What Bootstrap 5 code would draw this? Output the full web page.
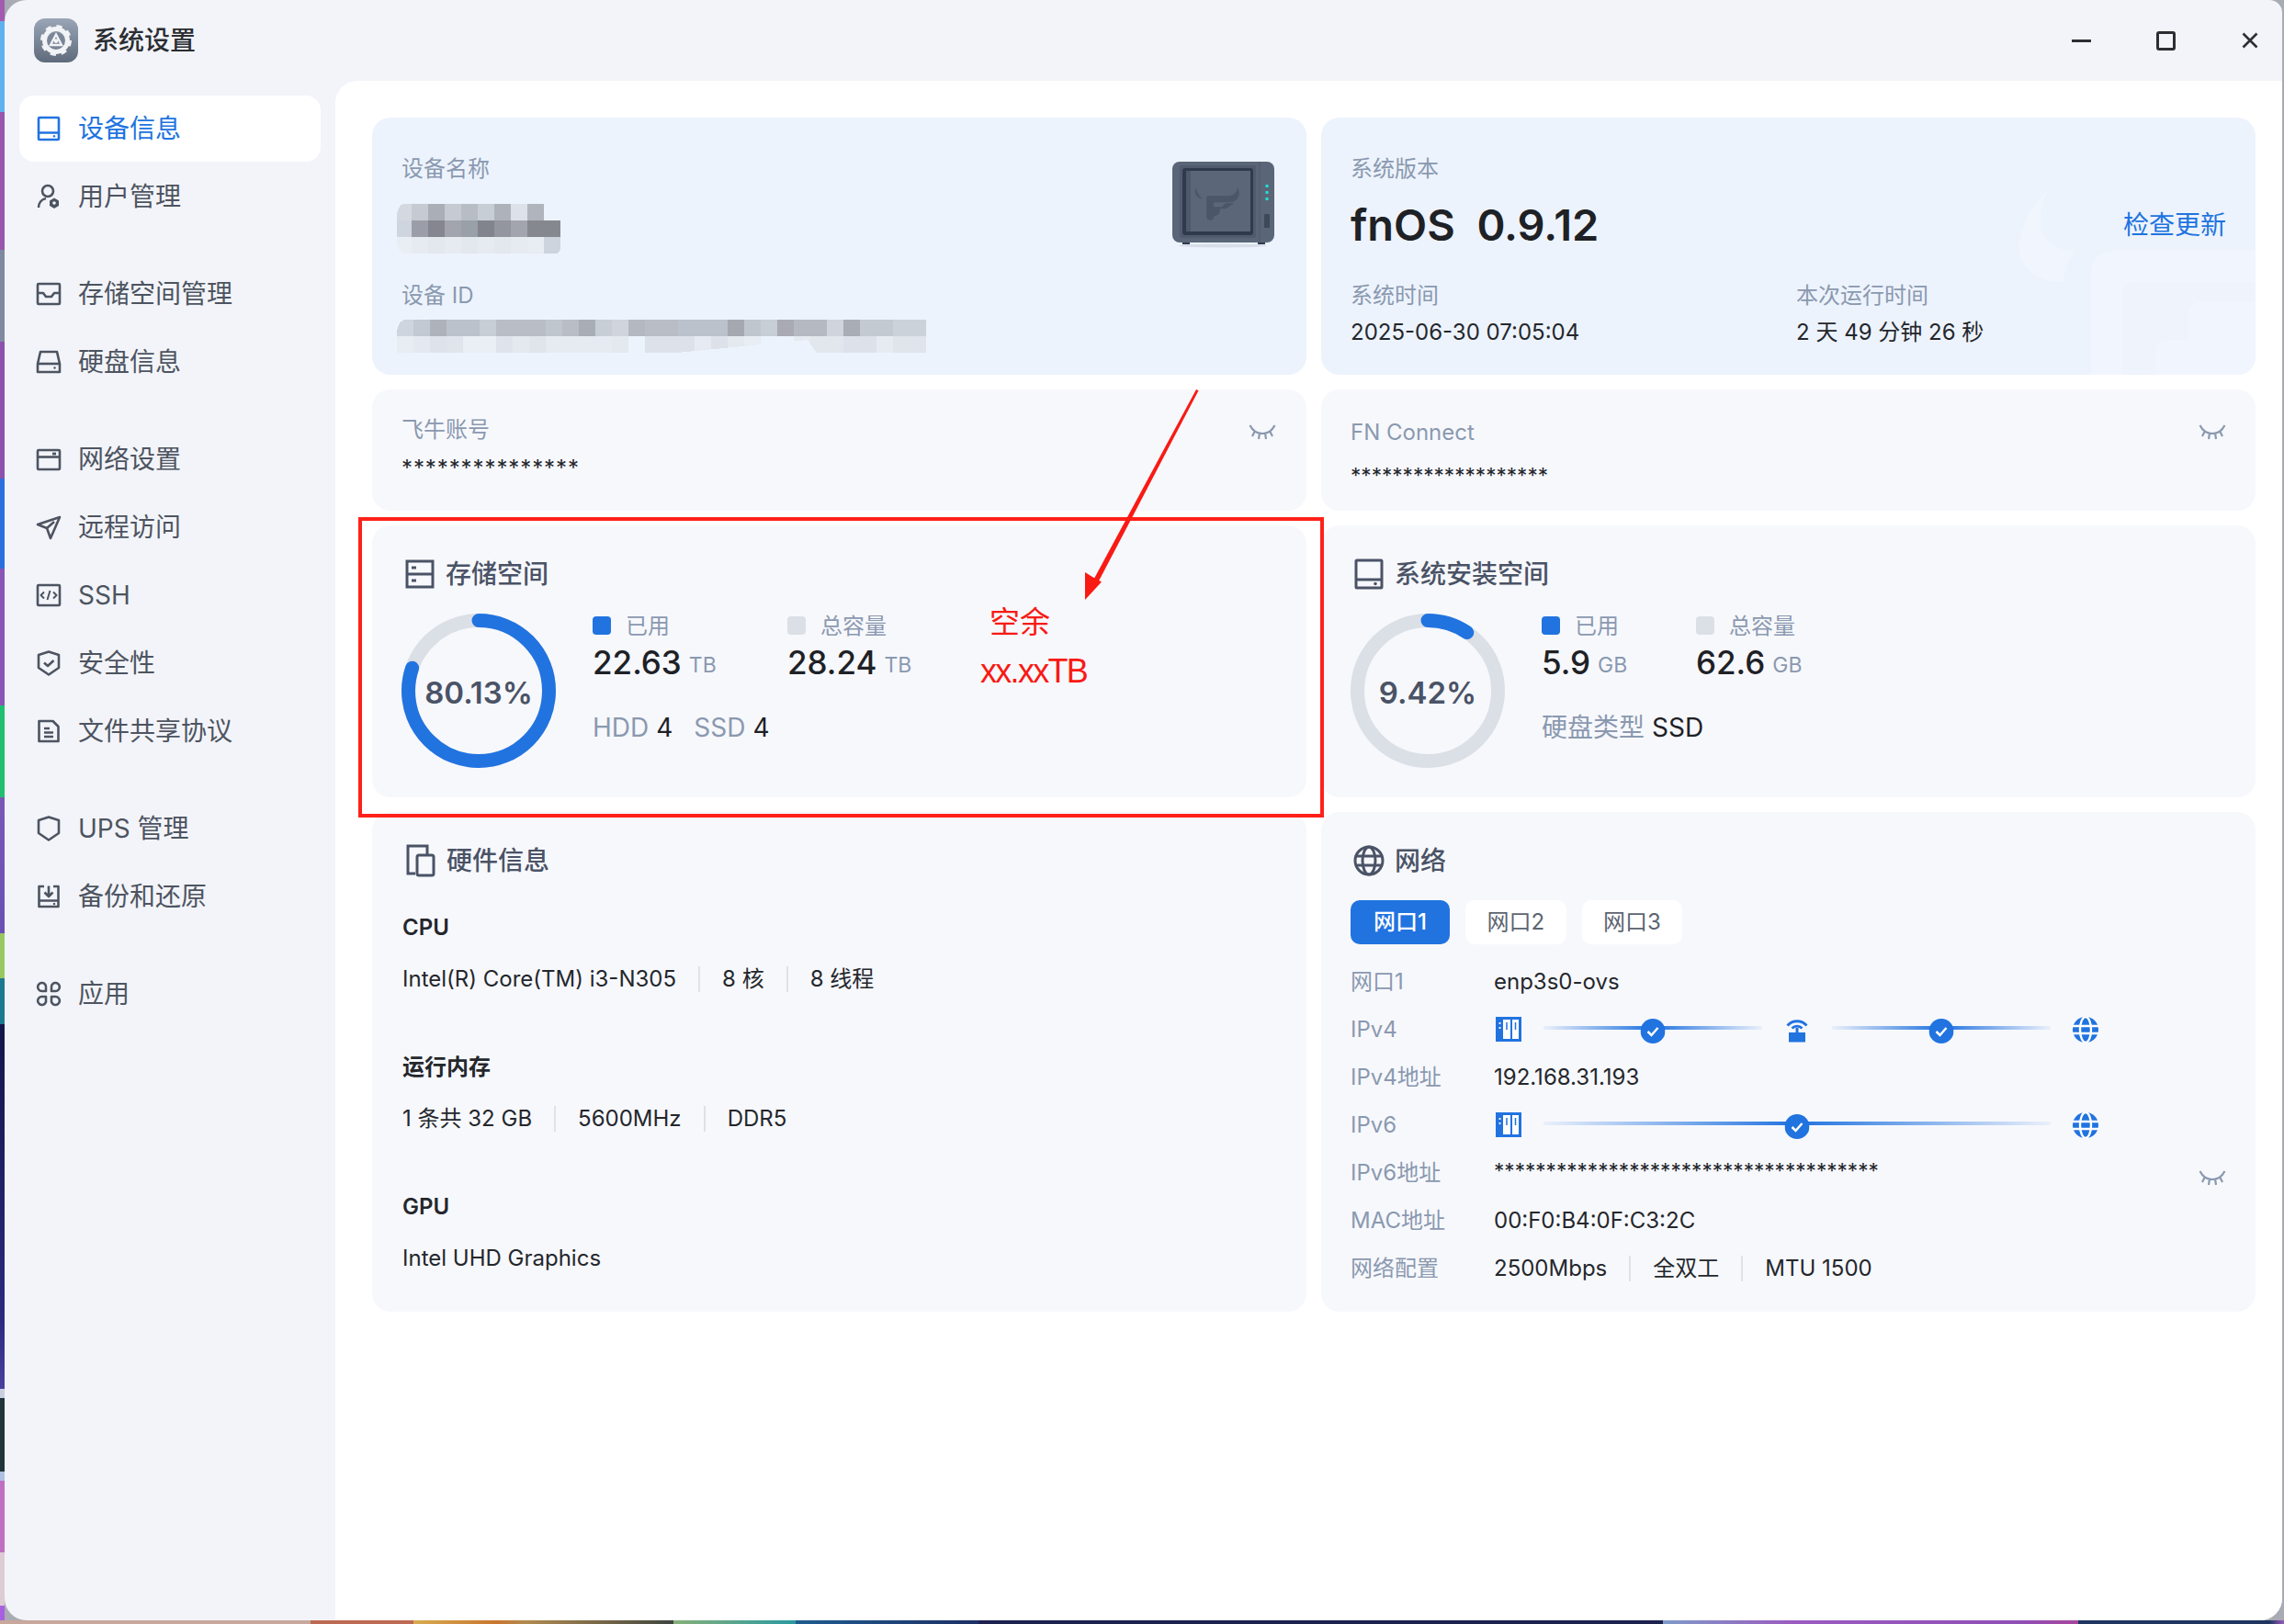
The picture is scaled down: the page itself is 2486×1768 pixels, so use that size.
<!doctype html>
<html lang="zh-CN">
<head>
<meta charset="utf-8">
<title>系统设置</title>
<link href="https://cdn.jsdelivr.net/npm/bootstrap@5.3.0/dist/css/bootstrap.min.css" rel="stylesheet">
<style>
html,body{width:2486px;height:1768px;margin:0;overflow:hidden}
body{font-family:Inter,"Noto Sans CJK SC",sans-serif;font-size:24px;line-height:36px;color:#24272c;
 background-color:#a9abb4;
 background-image:
  linear-gradient(to right,#c9a79c 0,#c9a79c 338px,#bd6a55 338px,#bd6a55 450px,#d9ab50 450px,#c9762f 540px,#b08a50 573px,#3f4540 733px,#86b07a 733px,#2a9aa0 866px,#1f5c90 866px,#1c2f66 1065px,#1d2150 1065px,#1d2150 1810px,#7f9ac8 1810px,#9a5cc0 1950px,#8f4fb5 2200px,#a8469e 2262px,#1f3560 2262px,#1f3560 2470px,#9a5cc0 2486px),
  linear-gradient(to bottom,#a35bb0 0,#a35bb0 23px,#5fb0ee 23px,#5fb0ee 122px,#9a55ae 122px,#9a55ae 272px,#7f8aa0 272px,#7f8aa0 372px,#8d50ad 372px,#8d50ad 521px,#2a6fdf 521px,#2a6fdf 619px,#8a55b5 619px,#8a55b5 768px,#20c070 768px,#20c070 868px,#7a58b8 868px,#6a50b5 1016px,#9ac860 1016px,#9ac860 1065px,#1a7a90 1065px,#1a7a90 1115px,#12164a 1115px,#2b2a80 1437px,#4a3fa0 1512px,#c8d0e0 1512px,#c8d0e0 1522px,#20343a 1522px,#20343a 1602px,#b0c0e0 1602px,#b0c0e0 1612px,#c070c0 1612px,#c070c0 1690px,#ddccd4 1690px,#ddccd4 1748px,#a860e0 1748px,#a860e0 1768px);
 background-repeat:no-repeat;
 background-size:100% 4px,5px 100%;
 background-position:0 1764px,0 0}
.win{margin-left:5px;width:2479px;height:1764px;border-radius:24px 14px 24px 24px;background:#f3f4f9;overflow:hidden}
.topbar{height:88px;padding-left:32px;padding-right:26px}
.appicon{width:48px;height:48px;border-radius:12px;background:linear-gradient(180deg,#9aa6b7,#5f6b7b)}
.apptitle{font-size:28px;font-weight:500;color:#2b2e33;margin-left:16px}
.ctl-gap{gap:71px}
.clz{margin-left:1.500px}
.side{width:360px;padding:16px}
.navi{height:72px;margin-bottom:2px;padding-left:18px;gap:18px;border-radius:16px;color:#4d5461;font-size:28px;text-decoration:none}
.navi svg{width:28px;height:28px;fill:none;stroke:currentColor;stroke-width:2.600;flex:none;stroke-linejoin:round}
.navi.on{background:#fff;color:#2173e0}
.navi:hover{color:#4d5461}
.navi.on:hover{color:#2173e0}
.grp{margin-bottom:34px}
.content{border-top-left-radius:24px;background:#fff;padding:40px 29px 0 40px}
.pane{border-radius:20px;background:#f7f8fc;position:relative;overflow:hidden;height:100%}
.tint{background:#edf3fc}
.rw1{height:280px}.rw2{height:132px}.rw3{height:296px}.rw4{height:544px}
.lbl{color:#8a99b0;line-height:36px}
.mosaic{display:block;margin-left:-5px}
.pad-dev{padding:38px 35px 0 32px}
.pad-sys{padding:38px 32px 0 32px}
.pad-acct{padding:26px 33px 0 32px}
.pad-conn{padding:29px 32px 0 32px}
.pad-store{padding:33px 32px 0 32px}
.pad-hw{padding:33px 32px 0 33px}
.mt-name{margin-top:20px}
.mt-id{margin-top:28px}
.mt-idv{margin-top:8px}
.nas{margin-top:9px}
.ver{font-size:47px;line-height:60px;font-weight:600;margin-top:13px;white-space:pre;color:#1e2126}
.upd{color:#2173e0;font-size:28px;text-decoration:none;margin-top:13px}
.tcol{width:485px}
.mt-t{margin-top:29px}
.mt-v{margin-top:4px}
.wm{position:absolute;right:0;bottom:0;display:block}
.over{position:relative;z-index:1}
.stars1{margin-top:6px;font-size:24px;letter-spacing:.9px}
.stars2{margin-top:11px;font-size:22.600px}
.eye{width:30px;height:20px;fill:none;stroke:#8a99b0;stroke-width:2.200;flex:none}
.eye-l{margin-top:6px}
.ttl{font-size:28px;line-height:40px;font-weight:500;color:#4a5366;gap:8px}
.ttl svg{width:40px;height:40px;fill:none;stroke:#4a5366;stroke-width:3;flex:none}
.donwrap{margin-top:23px;gap:40px}
.donut{width:168px;height:168px;position:relative;flex:none}
.donut svg{display:block;width:168px;height:168px;transform:rotate(-90deg)}
.pct{font-size:33px;line-height:40px;font-weight:600;color:#4a5366;margin-top:2px}
.stat{margin-top:-4px}
.w212{width:212px}.w168{width:168px}
.sq{width:20px;height:20px;border-radius:4px;margin-right:16px;flex:none;background:#dbdfe6;margin-top:-2px}
.sq.blue{background:#2173e0}
.big{font-size:35px;line-height:50px;font-weight:500;margin-top:-4px;color:#1e2126}
.unit{font-size:23px;color:#8a99b0;font-weight:400;margin-left:8px;vertical-align:2px}
.ln2{margin-top:25px;font-size:28px}
.ln2 b{font-weight:400;color:#1e2126;margin-left:8px}
.ln2 .lbl{color:#8a99b0}
.sp{margin-right:23px}
.hwgrp{margin-top:35px}
.hwl{font-weight:600;color:#24272c}
.hwv{margin-top:20px;margin-bottom:60px}
.hwgrp .hwv:last-child{margin-bottom:0}
.dv{width:2px;height:28px;background:#dfe2e8;margin:0 24px}
.tabs{margin-top:23px;gap:17px}
.tabbtn{height:48px;padding:0 23.500px;border-radius:10px;background:#fff;color:#5c6472;border:0;font-size:24px;line-height:48px}
.tabbtn.on{background:#2173e0;color:#fff;font-weight:500;padding:0 25px}
.tabbtn:hover{background:#fff;color:#5c6472}
.tabbtn.on:hover{background:#2173e0;color:#fff}
.netlist{margin-top:14px}
.nrow{height:52px;padding-top:2px}
.nkey{width:156px;color:#8a99b0;flex:none}
.path{width:656px;margin-left:2px}
.nic{width:28px;height:28px;flex:none;display:block}
.conn{position:relative;flex:1 1 0;height:4px;margin:-5px 24px 0;background:linear-gradient(90deg,rgba(33,115,224,.06),#2173e0 50%,rgba(33,115,224,.06))}
.chk{position:absolute;left:50%;top:-8px;transform:translateX(-50%);width:27px;height:27px;display:block}
.stars3{font-size:22.600px;margin-top:-5px}
.eye6{margin-top:11px}
.annot{position:absolute;left:0;top:0;width:100%;height:100%;pointer-events:none;z-index:5}
.redbox{position:absolute;left:25px;top:475px;width:1051px;height:327px;border:4px solid #ff2119}
.arrow{position:absolute;left:0;top:0}
.r-a{position:absolute;left:712px;top:567px;font-size:33px;line-height:44px;color:#f91a14;font-weight:400}
.r-b{position:absolute;left:702px;top:621px;font-size:36px;line-height:44px;color:#f91a14;font-family:"Liberation Sans",sans-serif;letter-spacing:-1.700px}
</style>
</head>
<body>
<div class="win d-flex flex-column">
  <header class="topbar d-flex align-items-center flex-shrink-0">
    <div class="appicon d-flex align-items-center justify-content-center">
      <svg width="34" height="34" viewBox="0 0 34 34"><circle cx="17" cy="17" r="12.500" fill="none" stroke="#f1f3f6" stroke-width="5"/><circle cx="17" cy="17" r="15" fill="none" stroke="#f1f3f6" stroke-width="4" stroke-dasharray="6 5.780"/><circle cx="17" cy="17" r="9" fill="#7b8798"/><path d="M17 10.500 23 22H11Z" fill="none" stroke="#f1f3f6" stroke-width="2.400"/><circle cx="17" cy="17.600" r="2.400" fill="#f1f3f6"/></svg>
    </div>
    <div class="apptitle">系统设置</div>
    <div class="ms-auto d-flex align-items-center ctl-gap">
      <svg width="21" height="21" viewBox="0 0 21 21"><rect y="9" width="21" height="3" fill="#2b2e33"/></svg>
      <svg width="21" height="21" viewBox="0 0 21 21"><rect x="1.500" y="1.500" width="18" height="18" rx="1.500" fill="none" stroke="#2b2e33" stroke-width="3"/></svg>
      <svg class="clz" width="18" height="18" viewBox="0 0 18 18"><path d="M1.500 1.500l15 15M16.500 1.500l-15 15" stroke="#2b2e33" stroke-width="2.600" fill="none"/></svg>
    </div>
  </header>
  <div class="d-flex flex-grow-1">
    <aside class="side flex-shrink-0">
      <nav class="d-flex flex-column">
        <a class="navi on d-flex align-items-center" href="#"><svg viewBox="0 0 28 28"><rect x="3" y="2" width="22" height="24" rx="1"/><path d="M3 18.500h22"/><circle cx="20" cy="22.300" r="1.200" fill="currentColor" stroke="none"/></svg>设备信息</a>
        <a class="navi grp d-flex align-items-center" href="#"><svg viewBox="0 0 28 28"><circle cx="13" cy="8" r="6"/><path d="M3 26c0-5 3-9 8-10"/><path d="M20 15.500l5 3v5.500l-5 3-5-3v-5.500z" fill="currentColor" stroke="none"/><circle cx="20" cy="21" r="1.800" fill="#f3f4f9" stroke="none"/></svg>用户管理</a>
        <a class="navi d-flex align-items-center" href="#"><svg viewBox="0 0 28 28"><rect x="2" y="3" width="24" height="22" rx="1"/><path d="M2 13h6l3 4h6l3-4h6"/></svg>存储空间管理</a>
        <a class="navi grp d-flex align-items-center" href="#"><svg viewBox="0 0 28 28"><path d="M2 16L5 3h18l3 13v9H2z"/><path d="M2 16h24"/><circle cx="20.500" cy="20.500" r="1.200" fill="currentColor" stroke="none"/></svg>硬盘信息</a>
        <a class="navi d-flex align-items-center" href="#"><svg viewBox="0 0 28 28"><rect x="2" y="4" width="24" height="21" rx="1"/><path d="M2 11.500h24"/><path d="M18 8h4" stroke-width="2.800"/></svg>网络设置</a>
        <a class="navi d-flex align-items-center" href="#"><svg viewBox="0 0 28 28"><path d="M26 3L2 11l10 4 4 11z"/><path d="M12 15l8-7"/></svg>远程访问</a>
        <a class="navi d-flex align-items-center" href="#"><svg viewBox="0 0 28 28"><rect x="2" y="3" width="24" height="22" rx="1"/><path d="M9 10.500l-3.500 3.500 3.500 3.500M19 10.500l3.500 3.500-3.500 3.500M15.500 9l-3 10" stroke-width="2"/></svg>SSH</a>
        <a class="navi d-flex align-items-center" href="#"><svg viewBox="0 0 28 28"><path d="M14 1.500L25 5v14l-11 7.500L3 19V5z"/><path d="M9 13.500l4 3.500 6.500-6"/></svg>安全性</a>
        <a class="navi grp d-flex align-items-center" href="#"><svg viewBox="0 0 28 28"><path d="M3.500 3h15l6 6v16h-21z"/><path d="M9 11h6M9 15.500h10M9 20h10"/></svg>文件共享协议</a>
        <a class="navi d-flex align-items-center" href="#"><svg viewBox="0 0 28 28"><path d="M14 1.500L25 5v14l-11 7.500L3 19V5z"/></svg>UPS 管理</a>
        <a class="navi grp d-flex align-items-center" href="#"><svg viewBox="0 0 28 28"><path d="M9 3H3.500v22h21V3H19"/><path d="M14 2.500v11M9.500 9.500l4.500 4.500 4.500-4.500M3.500 18.500h21"/><circle cx="20" cy="22" r="1.200" fill="currentColor" stroke="none"/></svg>备份和还原</a>
        <a class="navi d-flex align-items-center" href="#"><svg viewBox="0 0 28 28"><path d="M11 11V7.500a4.500 4.500 0 1 0-4.500 3.500zM17 11V7.500a4.500 4.500 0 1 1 4.500 3.500zM11 17v3.500a4.500 4.500 0 1 1-4.500-3.500zM17 17v3.500a4.500 4.500 0 1 0 4.500-3.500z"/></svg>应用</a>
      </nav>
    </aside>
    <main class="content flex-grow-1 position-relative">
      <div class="row g-3">
        <div class="col-6 rw1"><div class="card border-0 pane tint pad-dev">
          <div class="d-flex justify-content-between align-items-start">
            <div>
              <div class="lbl">设备名称</div>
              <svg class="mosaic mt-name" width="178" height="54" viewBox="0 0 178 54" shape-rendering="crispEdges"><g><rect width="16" height="18" fill="#d3d8e1"/><rect x="16" width="18" height="18" fill="#c6cad3"/><rect x="34" width="18" height="18" fill="#aaaeb7"/><rect x="52" width="18" height="18" fill="#c6cbd3"/><rect x="70" width="18" height="18" fill="#b8bdc5"/><rect x="88" width="18" height="18" fill="#c8ced6"/><rect x="106" width="18" height="18" fill="#aeb2ba"/><rect x="124" width="18" height="18" fill="#dde2ea"/><rect x="142" width="18" height="18" fill="#b0b4bc"/></g><g transform="translate(0,18)"><rect width="16" height="18" fill="#cfd5de"/><rect x="16" width="18" height="18" fill="#9b9ea8"/><rect x="34" width="18" height="18" fill="#85868f"/><rect x="52" width="18" height="18" fill="#a2a5ae"/><rect x="70" width="18" height="18" fill="#9aa0a8"/><rect x="88" width="18" height="18" fill="#82848d"/><rect x="106" width="18" height="18" fill="#93959f"/><rect x="124" width="18" height="18" fill="#a2a5ae"/><rect x="142" width="18" height="18" fill="#86888f"/><rect x="160" width="18" height="18" fill="#86888f"/></g><g transform="translate(0,36)"><rect width="16" height="18" fill="#e9edf4"/><rect x="16" width="18" height="18" fill="#e6ebf2"/><rect x="34" width="18" height="18" fill="#e3e8ef"/><rect x="52" width="18" height="18" fill="#e6ebf2"/><rect x="70" width="18" height="18" fill="#e3e8ef"/><rect x="88" width="18" height="18" fill="#e6ebf2"/><rect x="106" width="18" height="18" fill="#e3e8ef"/><rect x="124" width="18" height="18" fill="#e6ebf2"/><rect x="142" width="18" height="18" fill="#e8ecf3"/><rect x="160" width="18" height="18" fill="#ced4dd"/></g><path d="M0 0h8a8 14 0 0 0-8 14zM0 54h10a10 14 0 0 1-10-14zM178 0h-18v18h18zM178 54h-4a4 8 0 0 0 4-8z" fill="#edf3fc"/></svg>
              <div class="lbl mt-id">设备 ID</div>
              <svg class="mosaic mt-idv" width="576" height="36" viewBox="0 0 576 36" shape-rendering="crispEdges"><g><rect x="0" width="18" height="18" fill="#cfd5de"/><rect x="18" width="18" height="18" fill="#c3c9d2"/><rect x="36" width="18" height="18" fill="#aeb2bb"/><rect x="54" width="18" height="18" fill="#bcc2cb"/><rect x="72" width="18" height="18" fill="#bcc2cb"/><rect x="90" width="18" height="18" fill="#c8ced6"/><rect x="108" width="18" height="18" fill="#b8bdc6"/><rect x="126" width="18" height="18" fill="#b8bdc6"/><rect x="144" width="18" height="18" fill="#b8bdc6"/><rect x="162" width="18" height="18" fill="#c0c6ce"/><rect x="180" width="18" height="18" fill="#b8bdc6"/><rect x="198" width="18" height="18" fill="#a9aeb6"/><rect x="216" width="18" height="18" fill="#c8ced6"/><rect x="234" width="18" height="18" fill="#d0d5dd"/><rect x="252" width="18" height="18" fill="#b4b9c1"/><rect x="270" width="18" height="18" fill="#b8bdc6"/><rect x="288" width="18" height="18" fill="#b8bdc6"/><rect x="306" width="18" height="18" fill="#bcc2cb"/><rect x="324" width="18" height="18" fill="#bcc2cb"/><rect x="342" width="18" height="18" fill="#bcc2cb"/><rect x="360" width="18" height="18" fill="#a5a8b1"/><rect x="378" width="18" height="18" fill="#c0c6ce"/><rect x="396" width="18" height="18" fill="#c8ced6"/><rect x="414" width="18" height="18" fill="#a9aab3"/><rect x="432" width="18" height="18" fill="#b5bac2"/><rect x="450" width="18" height="18" fill="#b5bac2"/><rect x="468" width="18" height="18" fill="#d0d5dd"/><rect x="486" width="18" height="18" fill="#a9aeb6"/><rect x="504" width="18" height="18" fill="#c4cad2"/><rect x="522" width="18" height="18" fill="#c4cad2"/><rect x="540" width="18" height="18" fill="#ccd2da"/><rect x="558" width="18" height="18" fill="#ccd2da"/></g><g transform="translate(0,18)"><rect x="0" width="18" height="18" fill="#e8edf4"/><rect x="18" width="18" height="18" fill="#e4e9f0"/><rect x="36" width="18" height="18" fill="#dee3eb"/><rect x="54" width="18" height="18" fill="#e0e5ec"/><rect x="72" width="18" height="18" fill="#eaeff6"/><rect x="90" width="18" height="18" fill="#eaeff6"/><rect x="108" width="18" height="18" fill="#dfe4ec"/><rect x="126" width="18" height="18" fill="#e4e9f0"/><rect x="144" width="18" height="18" fill="#e0e5ec"/><rect x="162" width="18" height="18" fill="#e6ebf2"/><rect x="180" width="18" height="18" fill="#e6ebf2"/><rect x="198" width="18" height="18" fill="#e6ebf2"/><rect x="216" width="18" height="18" fill="#e6ebf2"/><rect x="234" width="18" height="18" fill="#e4e9f0"/><rect x="252" width="18" height="18" fill="#edf3fc"/><rect x="270" width="18" height="18" fill="#dde2ea"/><rect x="288" width="18" height="18" fill="#dde2ea"/><rect x="306" width="18" height="18" fill="#dde2ea"/><rect x="324" width="18" height="18" fill="#e6ebf2"/><rect x="342" width="18" height="18" fill="#dde2ea"/><rect x="360" width="18" height="18" fill="#e4e9f0"/><rect x="378" width="18" height="18" fill="#e8edf4"/><rect x="396" width="18" height="18" fill="#edf3fc"/><rect x="414" width="18" height="18" fill="#edf3fc"/><rect x="432" width="18" height="18" fill="#e6ebf2"/><rect x="450" width="18" height="18" fill="#e2e7ee"/><rect x="468" width="18" height="18" fill="#e2e7ee"/><rect x="486" width="18" height="18" fill="#dde2ea"/><rect x="504" width="18" height="18" fill="#dde2ea"/><rect x="522" width="18" height="18" fill="#e6ebf2"/><rect x="540" width="18" height="18" fill="#e0e5ec"/><rect x="558" width="18" height="18" fill="#e0e5ec"/></g><path d="M305 36L447 22l10 14zM0 0h10a10 14 0 0 0-10 14z" fill="#edf3fc"/></svg>
            </div>
            <svg class="nas" width="111" height="95" viewBox="0 0 111 95"><ellipse cx="55" cy="92.500" rx="48" ry="2" fill="#d7dee9"/><rect x="11" y="86" width="8" height="5" fill="#2f3b4c"/><rect x="93" y="86" width="8" height="5" fill="#2f3b4c"/><rect y="1" width="111" height="88" rx="8" fill="#5a6678"/><rect x="94.500" y="1" width="1" height="88" fill="#4f5a6c"/><rect x="8" y="5" width="83" height="79" rx="3" fill="#505b6d"/><rect x="11" y="8" width="77" height="73" rx="3" fill="#2f3b4c"/><rect x="15" y="11" width="70" height="66" fill="#5b6779"/><rect x="15" y="11" width="5" height="66" fill="#4e596b"/><path d="M25.700 29.300c-2.500 5.500-.5 11 7.600 12.400-3.500-2.700-6.500-6.500-7.600-12.400zM39.500 38.300H60c6 0 10.500-3.500 11-9.300 2.500 4 2.500 9-.5 12.500-2.500 2.800-5.500 3.800-8.500 3.800H45v5h9l4-4h9.300l-9 6H52.300l-1.600 6-5.700 2.400V62c0 1.500-1 2.500-2.500 2.500H40c-1.500 0-2.700-1-2.700-2.500V40.500c0-1.300.8-2.200 2.200-2.200z" fill="#4b5668"/><rect x="101.500" y="26" width="3" height="3" fill="#20e0d8"/><rect x="101.500" y="33" width="3" height="3" fill="#20e0d8"/><rect x="101.500" y="40" width="3" height="3" fill="#20e0d8"/><rect x="100" y="58" width="6" height="15" rx="1" fill="#3d4859"/></svg>
          </div>
        </div></div>
        <div class="col-6 rw1"><div class="card border-0 pane tint pad-sys">
          <svg class="wm" width="259" height="203" viewBox="0 0 259 203"><path d="M34 0C12 22 2 44 2 64c0 24 20 38 48 38 0-12 4-22 12-33C38 66 25 55 25 35c0-13 3-25 9-35z" fill="#f1f5fd"/><path d="M80 203V92c0-14 10-24 24-24h155v135z" fill="#f1f5fd"/><path d="M114 203V116c0-8 6-14 14-14h131v101z" fill="#eff4fc"/><path d="M150 203v-24c0-8 6-14 14-14h22v-28c0-8 6-14 14-14h59v80z" fill="#f1f5fd"/></svg>
          <div class="over">
            <div class="lbl">系统版本</div>
            <div class="d-flex justify-content-between align-items-center">
              <div class="ver">fnOS  0.9.12</div>
              <a class="upd" href="#">检查更新</a>
            </div>
            <div class="d-flex mt-t">
              <div class="tcol"><div class="lbl">系统时间</div><div class="mt-v">2025-06-30 07:05:04</div></div>
              <div><div class="lbl">本次运行时间</div><div class="mt-v">2 天 49 分钟 26 秒</div></div>
            </div>
          </div>
        </div></div>

        <div class="col-6 rw2"><div class="card border-0 pane pad-acct">
          <div class="d-flex justify-content-between align-items-center"><div class="lbl">飞牛账号</div><svg class="eye eye-l" viewBox="0 0 30 20"><path d="M1.500 2c3 6 8 9 13.500 9s10.500-3 13.500-9M7 8l-3 6M12 10.500l-1 6.500M18 10.500l1 6.500M23 8l3 6"/></svg></div>
          <div class="stars1">***************</div>
        </div></div>
        <div class="col-6 rw2"><div class="card border-0 pane pad-conn">
          <div class="d-flex justify-content-between align-items-center"><div class="lbl">FN Connect</div><svg class="eye" viewBox="0 0 30 20"><path d="M1.500 2c3 6 8 9 13.500 9s10.500-3 13.500-9M7 8l-3 6M12 10.500l-1 6.500M18 10.500l1 6.500M23 8l3 6"/></svg></div>
          <div class="stars2">*******************</div>
        </div></div>

        <div class="col-6 rw3"><div class="card border-0 pane pad-store">
          <div class="ttl d-flex align-items-center"><svg viewBox="0 0 40 40"><rect x="6" y="6" width="28" height="28"/><path d="M6 20h28"/><rect x="11" y="11.500" width="5" height="3" fill="#4a5366" stroke="none"/><rect x="11" y="25.500" width="5" height="3" fill="#4a5366" stroke="none"/></svg>存储空间</div>
          <div class="d-flex align-items-start donwrap">
            <div class="donut"><svg viewBox="0 0 168 168"><circle cx="84" cy="84" r="76.500" fill="none" stroke="#dbdfe6" stroke-width="15"/><circle cx="84" cy="84" r="76.500" fill="none" stroke="#2173e0" stroke-width="15" stroke-linecap="round" stroke-dasharray="385.200 480.660"/></svg><div class="pct position-absolute top-50 start-50 translate-middle">80.13%</div></div>
            <div class="stat">
              <div class="d-flex">
                <div class="w212"><div class="d-flex align-items-center"><span class="sq blue"></span><span class="lbl">已用</span></div><div class="big">22.63<span class="unit">TB</span></div></div>
                <div class="w212"><div class="d-flex align-items-center"><span class="sq"></span><span class="lbl">总容量</span></div><div class="big">28.24<span class="unit">TB</span></div></div>
              </div>
              <div class="ln2"><span class="lbl">HDD</span><b class="sp">4</b><span class="lbl">SSD</span><b>4</b></div>
            </div>
          </div>
        </div></div>
        <div class="col-6 rw3"><div class="card border-0 pane pad-store">
          <div class="ttl d-flex align-items-center"><svg viewBox="0 0 40 40"><rect x="6" y="5" width="28" height="30" rx="1"/><path d="M6 26h28"/><circle cx="27" cy="30.500" r="1.800" fill="#4a5366" stroke="none"/></svg><span>系统安装空间</span></div>
          <div class="d-flex align-items-start donwrap">
            <div class="donut"><svg viewBox="0 0 168 168"><circle cx="84" cy="84" r="76.500" fill="none" stroke="#dbdfe6" stroke-width="15"/><circle cx="84" cy="84" r="76.500" fill="none" stroke="#2173e0" stroke-width="15" stroke-linecap="round" stroke-dasharray="45.280 480.660"/></svg><div class="pct position-absolute top-50 start-50 translate-middle">9.42%</div></div>
            <div class="stat">
              <div class="d-flex">
                <div class="w168"><div class="d-flex align-items-center"><span class="sq blue"></span><span class="lbl">已用</span></div><div class="big">5.9<span class="unit">GB</span></div></div>
                <div class="w168"><div class="d-flex align-items-center"><span class="sq"></span><span class="lbl">总容量</span></div><div class="big">62.6<span class="unit">GB</span></div></div>
              </div>
              <div class="ln2"><span class="lbl">硬盘类型</span><b>SSD</b></div>
            </div>
          </div>
        </div></div>

        <div class="col-6 rw4"><div class="card border-0 pane pad-hw">
          <div class="ttl d-flex align-items-center"><svg viewBox="0 0 40 40"><path d="M14 34H6V4h21v10"/><rect x="16" y="14" width="18" height="22" rx="2"/></svg>硬件信息</div>
          <div class="hwgrp">
            <div class="hwl">CPU</div>
            <div class="hwv d-flex align-items-center"><span>Intel(R) Core(TM) i3-N305</span><span class="dv"></span><span>8 核</span><span class="dv"></span><span>8 线程</span></div>
            <div class="hwl">运行内存</div>
            <div class="hwv d-flex align-items-center"><span>1 条共 32 GB</span><span class="dv"></span><span>5600MHz</span><span class="dv"></span><span>DDR5</span></div>
            <div class="hwl">GPU</div>
            <div class="hwv">Intel UHD Graphics</div>
          </div>
        </div></div>
        <div class="col-6 rw4"><div class="card border-0 pane pad-store">
          <div class="ttl d-flex align-items-center"><svg viewBox="0 0 40 40"><circle cx="20" cy="20" r="15"/><ellipse cx="20" cy="20" rx="7" ry="15"/><path d="M5 15h30M5 25h30"/></svg><span>网络</span></div>
          <div class="tabs d-flex">
            <button class="btn tabbtn on" type="button">网口1</button>
            <button class="btn tabbtn" type="button">网口2</button>
            <button class="btn tabbtn" type="button">网口3</button>
          </div>
          <div class="netlist">
            <div class="nrow d-flex align-items-center"><div class="nkey">网口1</div><div>enp3s0-ovs</div></div>
            <div class="nrow d-flex align-items-center"><div class="nkey">IPv4</div>
              <div class="path d-flex align-items-center">
                <svg class="nic" viewBox="0 0 28 28"><rect width="28" height="27" fill="#2173e0"/><rect x="8" y="3" width="8" height="21" fill="#fff"/><rect x="18" y="3" width="7" height="21" fill="#fff"/><path d="M12 6v8M21.500 6v8" stroke="#2173e0" stroke-width="1.500"/><path d="M4.500 6v2M4.500 11v2" stroke="#fff" stroke-width="1.800"/></svg>
                <div class="conn"><svg class="chk" viewBox="0 0 27 27"><circle cx="13.500" cy="13.500" r="13.500" fill="#2173e0"/><path d="M8 14l4 4 7-8" fill="none" stroke="#fff" stroke-width="2.500"/></svg></div>
                <svg class="nic" viewBox="0 0 28 28"><path d="M3.500 9.500a14 14 0 0 1 21 0M8.500 12.500a7.500 7.500 0 0 1 11 0" fill="none" stroke="#2173e0" stroke-width="2.800"/><path d="M12.500 12h3v5H23v10.500H5V17h7.500z" fill="#2173e0"/></svg>
                <div class="conn"><svg class="chk" viewBox="0 0 27 27"><circle cx="13.500" cy="13.500" r="13.500" fill="#2173e0"/><path d="M8 14l4 4 7-8" fill="none" stroke="#fff" stroke-width="2.500"/></svg></div>
                <svg class="nic" viewBox="0 0 28 28"><circle cx="14" cy="14" r="14" fill="#2173e0"/><ellipse cx="14" cy="14" rx="6" ry="14" fill="none" stroke="#fff" stroke-width="2.400"/><path d="M0 10h28M0 18h28" stroke="#fff" stroke-width="2.400"/></svg>
              </div>
            </div>
            <div class="nrow d-flex align-items-center"><div class="nkey">IPv4地址</div><div>192.168.31.193</div></div>
            <div class="nrow d-flex align-items-center"><div class="nkey">IPv6</div>
              <div class="path d-flex align-items-center">
                <svg class="nic" viewBox="0 0 28 28"><rect width="28" height="27" fill="#2173e0"/><rect x="8" y="3" width="8" height="21" fill="#fff"/><rect x="18" y="3" width="7" height="21" fill="#fff"/><path d="M12 6v8M21.500 6v8" stroke="#2173e0" stroke-width="1.500"/><path d="M4.500 6v2M4.500 11v2" stroke="#fff" stroke-width="1.800"/></svg>
                <div class="conn"><svg class="chk" viewBox="0 0 27 27"><circle cx="13.500" cy="13.500" r="13.500" fill="#2173e0"/><path d="M8 14l4 4 7-8" fill="none" stroke="#fff" stroke-width="2.500"/></svg></div>
                <svg class="nic" viewBox="0 0 28 28"><circle cx="14" cy="14" r="14" fill="#2173e0"/><ellipse cx="14" cy="14" rx="6" ry="14" fill="none" stroke="#fff" stroke-width="2.400"/><path d="M0 10h28M0 18h28" stroke="#fff" stroke-width="2.400"/></svg>
              </div>
            </div>
            <div class="nrow d-flex align-items-center"><div class="nkey">IPv6地址</div><div class="stars3">*************************************</div><svg class="eye eye6 ms-auto" viewBox="0 0 30 20"><path d="M1.500 2c3 6 8 9 13.500 9s10.500-3 13.500-9M7 8l-3 6M12 10.500l-1 6.500M18 10.500l1 6.500M23 8l3 6"/></svg></div>
            <div class="nrow d-flex align-items-center"><div class="nkey">MAC地址</div><div>00:F0:B4:0F:C3:2C</div></div>
            <div class="nrow d-flex align-items-center"><div class="nkey">网络配置</div><span>2500Mbps</span><span class="dv"></span><span>全双工</span><span class="dv"></span><span>MTU 1500</span></div>
          </div>
        </div></div>
      </div>
      <div class="annot">
        <div class="redbox"></div>
        <svg class="arrow" width="1100" height="700" viewBox="0 0 1100 700"><path d="M937 336L939.500 337.200 831 544.500 826 541.800z" fill="#f91a14"/><path d="M816 565L816 535 824 540 834 545.500z" fill="#f91a14"/></svg>
        <div class="r-a">空余</div>
        <div class="r-b">xx.xxTB</div>
      </div>
    </main>
  </div>
</div>
</body>
</html>
